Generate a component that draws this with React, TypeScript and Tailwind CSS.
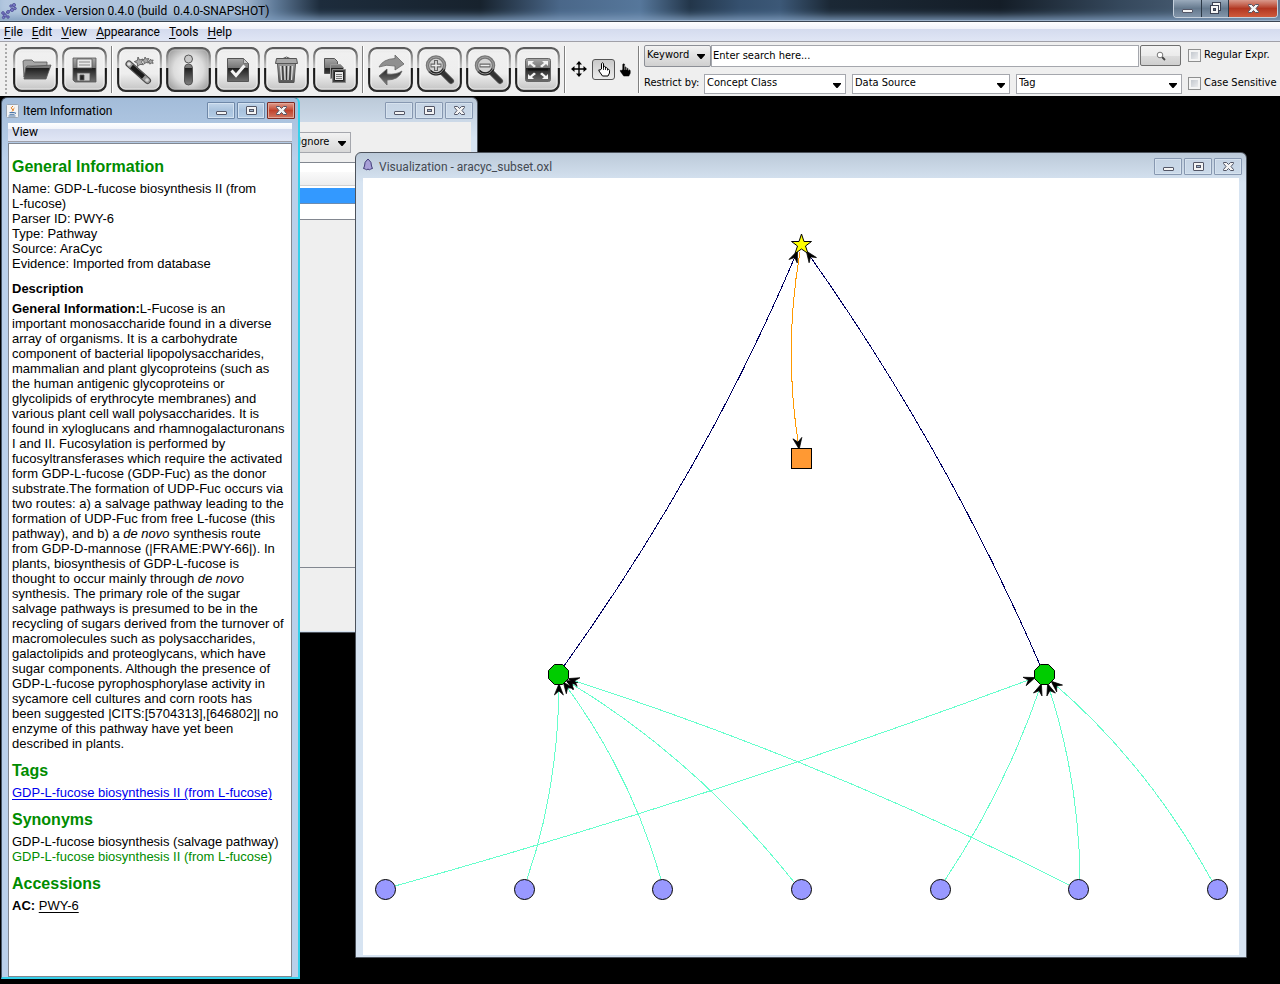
import React from "react";

type Kids = { children?: React.ReactNode };

function Defs() {
  return (
    <svg width="0" height="0" className="absolute" aria-hidden="true">
      <defs>
        <linearGradient id="frame" x1="0" y1="0" x2="0" y2="1">
          <stop offset="0" stopColor="#5a5a5a" />
          <stop offset="0.2" stopColor="#8a8a8a" />
          <stop offset="0.46" stopColor="#c8c8c8" />
          <stop offset="0.47" stopColor="#141414" />
          <stop offset="1" stopColor="#2c2c2c" />
        </linearGradient>
        <linearGradient id="face" x1="0" y1="0" x2="0" y2="1">
          <stop offset="0" stopColor="#e6e6e6" />
          <stop offset="0.12" stopColor="#f0f0f0" />
          <stop offset="0.6" stopColor="#eeeeee" />
          <stop offset="1" stopColor="#c2c2c2" />
        </linearGradient>
        <radialGradient id="pressed" cx="0.5" cy="0.5" r="0.7">
          <stop offset="0" stopColor="#f4f4f4" />
          <stop offset="0.5" stopColor="#dcdcdc" />
          <stop offset="1" stopColor="#8a8a8a" />
        </radialGradient>
        <linearGradient id="glyph" gradientUnits="userSpaceOnUse" x1="0" y1="9" x2="0" y2="36">
          <stop offset="0" stopColor="#b4b4b4" />
          <stop offset="0.43" stopColor="#777777" />
          <stop offset="0.44" stopColor="#1c1c1c" />
          <stop offset="1" stopColor="#777777" />
        </linearGradient>
        <linearGradient id="soft" gradientUnits="userSpaceOnUse" x1="0" y1="9" x2="0" y2="36">
          <stop offset="0" stopColor="#b8b8b8" />
          <stop offset="1" stopColor="#555555" />
        </linearGradient>
      </defs>
    </svg>
  );
}

function ToolButton({ label, pressed, children }: Kids & { label: string; pressed?: boolean }) {
  return (
    <button aria-label={label} className="size-[45px] shrink-0">
      <svg viewBox="0 0 45 45" className="size-[45px]">
        <rect x="1.2" y="1.2" width="42.6" height="42.6" rx="7.5" fill={pressed ? "url(#pressed)" : "url(#face)"} stroke="url(#frame)" strokeWidth="2.2" />
        <rect x="3" y="3" width="39" height="39" rx="5.5" fill="none" stroke="#fff" strokeOpacity={pressed ? 0.2 : 0.6} />
        {children}
      </svg>
    </button>
  );
}

function Sep() {
  return <div className="h-[47px] w-[2px] shrink-0 border-l border-[#808080] bg-white" />;
}

const FolderIcon = (
  <g stroke="#555" strokeWidth="0.8">
    <path d="M10 14l2-1h7l2 2h13v4H14l-3 11z" fill="#a5a5a5" />
    <path d="M13 20l25-2-5 14H11z" fill="url(#glyph)" />
  </g>
);
const SaveIcon = (
  <g stroke="#555" strokeWidth="0.8">
    <path d="M11 11h23v24H13l-2-2z" fill="url(#glyph)" />
    <path d="M15 12h15v9H15z" fill="#e8e8e8" />
    <path d="M17 15h11M17 18h11" stroke="#888" strokeWidth="1.2" />
    <path d="M15 26h13v8H15z" fill="#cfcfcf" />
    <path d="M18 28h4v5h-4z" fill="#222" />
  </g>
);
const WandIcon = (
  <g>
    <path d="M12 17l18.500 16.500" stroke="#4a4a4a" strokeWidth="7" strokeLinecap="round" />
    <path d="M12 17l18.500 16.500" stroke="#999" strokeWidth="5" strokeLinecap="round" />
    <path d="M14.500 19.500l12 10.500" stroke="#1a1a1a" strokeWidth="4.500" />
    <circle cx="12" cy="17" r="1.800" fill="#e6e6e6" />
    <circle cx="30" cy="33" r="1.800" fill="#d6d6d6" />
    <g fill="#aaa" stroke="#666" strokeWidth="1">
      <path d="M21 10l1.500 3 3.500-1-1.500 3.200 2 2.500-3.500-.3-2.500 2.200-.2-3.400-3-1.600 3.200-1.200z" />
      <path d="M28 10l1.200 2 2.600-.5-1.200 2.300 1 2.200-2.500-.5-2 1.400v-2.500l-1.800-1.400 2.300-.8z" />
      <path d="M33.500 12l.8 1.400 1.900-.4-.9 1.700.9 1.600-1.900-.2-1.500 1-.2-1.800-1.300-1 1.600-.7z" />
    </g>
  </g>
);
const InfoIcon = (
  <g stroke="#555" strokeWidth="1">
    <circle cx="22.500" cy="12" r="4" fill="#c8c8c8" />
    <rect x="18.500" y="17" width="8" height="21" rx="4" fill="url(#glyph)" />
  </g>
);
const CheckIcon = (
  <g>
    <path d="M12.500 11.500h16l5 5v18h-21z" fill="url(#glyph)" stroke="#555" />
    <path d="M28.500 11.500v5h5z" fill="#ccc" stroke="#666" strokeWidth="0.8" />
    <path d="M16.500 23.500l4.500 5 8.500-10" fill="none" stroke="#f4f4f4" strokeWidth="3" />
  </g>
);
const TrashIcon = (
  <g stroke="#555" fill="none">
    <path d="M19 11.500q3.500-3 7 0" />
    <path d="M13.500 16.500h18l-1.500 19h-15z" fill="url(#soft)" />
    <path d="M12.500 11.500h20l1 5h-22z" fill="#a8a8a8" />
    <path d="M16.500 19l1 14M20.500 19l.5 14M24.500 19l-.5 14M28.500 19l-1 14" stroke="#ddd" strokeWidth="1.300" />
    <path d="M18.500 19l.7 14M22.500 19v14M26.500 19l-.7 14" stroke="#333" />
  </g>
);
const CopyIcon = (
  <g stroke="#555">
    <path d="M11.500 11.500h10l3 3v12h-13z" fill="url(#glyph)" />
    <path d="M17.500 17.500h10l3 3v11h-13z" fill="url(#glyph)" stroke="#999" />
    <path d="M19.500 22.500h13v13h-13z" fill="#444" stroke="#888" />
    <path d="M21.500 24.500h9v9h-9z" fill="#e8e8e8" stroke="#222" />
    <path d="M23 27.500h6M23 29.500h6M23 31.500h6" stroke="#777" />
  </g>
);
const RefreshIcon = (
  <g stroke="#666" strokeWidth="0.8">
    <path d="M11 20q4-8 16-8.500V8l9 9-9 6v-4q-9-2-16 1z" fill="#909090" />
    <path d="M34 24q-3 9-15 9v5l-8-9 8-7v5q9 1 15-3z" fill="url(#glyph)" />
  </g>
);
const zoomIcon = (plus: boolean) => (
  <g>
    <path d="M25 25l9 9" stroke="#555" strokeWidth="6" strokeLinecap="round" />
    <path d="M26 26l8 8" stroke="#333" strokeWidth="4" strokeLinecap="round" />
    <circle cx="19" cy="18.500" r="8.500" fill="#d4d4d4" stroke="#777" strokeWidth="3.500" />
    <path d="M13 24a8.500 8.500 0 0 0 14-2" fill="none" stroke="#222" strokeWidth="3" />
    <circle cx="19" cy="18.500" r="8.500" fill="none" stroke="#aaa" strokeWidth="0.8" />
    <path d={plus ? "M13.500 18.500h11M19 13v11" : "M13.500 18.500h11"} stroke="#666" strokeWidth="4" />
    <path d={plus ? "M14.500 18.500h9M19 14v9" : "M14.500 18.500h9"} stroke="#eee" strokeWidth="1.500" />
  </g>
);
const FitIcon = (
  <g>
    <rect x="10.500" y="11.500" width="25" height="23" rx="2" fill="url(#glyph)" stroke="#666" />
    <path d="M13 21.500h20v2H13z" fill="#111" />
    <g fill="#f2f2f2">
      <path d="M13 14h6l-2 2 4 3-2 1.500-4-3.500-2 2zM33 14h-6l2 2-4 3 2 1.500 4-3.500 2 2zM13 32h6l-2-2 4-3-2-1.500-4 3.500-2-2zM33 32h-6l2-2-4-3 2-1.500 4 3.500 2-2z" />
    </g>
  </g>
);

const handPath = "M5.500 8V2.500q1.200-1.500 2 0V7V5.500q1.500-.8 2 .5V7q1.500-1 2 .5v1q1.500-.8 2 .8V12l-1.500 3H6.500l-3.500-5q-.8-1.800 1-1z";

function DropSelect({ label, value, className }: { label: string; value: string; className: string }) {
  return (
    <div className={"relative flex h-5 min-w-0 " + className}>
      <select aria-label={label} className="w-full appearance-none border border-[#a5a7ad] bg-white pl-[2px] outline-none">
        <option>{value}</option>
      </select>
      <svg className="pointer-events-none absolute right-[5px] top-[9px]" width="8" height="5" viewBox="0 0 8 5">
        <path d="M0 0h8v1L4.500 5h-1L0 1z" fill="#000" />
      </svg>
    </div>
  );
}

function Check({ text }: { text: string }) {
  return (
    <label className="flex w-[90px] shrink-0 items-center gap-[3px] whitespace-nowrap">
      <input type="checkbox" className="size-[13px] shrink-0 appearance-none border border-[#8e8f8f] bg-linear-to-br from-[#b9bec6] to-[#f6f6f6] shadow-[inset_0_0_0_2px_#f4f4f4]" />
      {text}
    </label>
  );
}

function WindowGlyph({ kind }: { kind: "min" | "max" | "close" }) {
  return (
    <svg width="13" height="11" viewBox="0 0 13 11" fill="#f4f4f4" stroke="#535666">
      {kind === "min" && <rect x="1.500" y="6.500" width="10" height="3" rx="0.500" />}
      {kind === "max" && (
        <>
          <rect x="1.500" y="1.500" width="10" height="8" rx="0.500" />
          <rect x="4.500" y="4.500" width="4" height="2" fill="#9fb4cc" />
        </>
      )}
      {kind === "close" && <path d="M1.500 1.500h3l2 2 2-2h3v1L9 5.500l2.500 3v1h-3l-2-2-2 2h-3v-1L4 5.500l-2.500-3z" />}
    </svg>
  );
}

function Controls({ active }: { active?: boolean }) {
  const base = "flex h-[17px] w-7 items-center justify-center rounded-[1px] border ";
  const idle = active
    ? "border-[#6f88a8] bg-linear-to-b from-[#c3d6ea] via-[#a9c2dd] to-[#b4cde6] shadow-[inset_0_0_0_1px_#d3e2f1]"
    : "border-[#8798b1] bg-linear-to-b from-[#c6d4e4] to-[#cbdaea] shadow-[inset_0_0_0_1px_#d6e2ee]";
  const close = active
    ? "border-[#7c2a22] bg-linear-to-b from-[#dd9c8e] via-[#c0422c] to-[#cf7560] shadow-[inset_0_0_0_1px_#e3a899]"
    : idle;
  return (
    <div className="flex gap-[2px]">
      <button aria-label="Minimize" className={base + idle}><WindowGlyph kind="min" /></button>
      <button aria-label="Maximize" className={base + idle}><WindowGlyph kind="max" /></button>
      <button aria-label="Close" className={base + close}><WindowGlyph kind="close" /></button>
    </div>
  );
}

const menus = ["File", "Edit", "View", "Appearance", "Tools", "Help"];

function Header() {
  return (
    <header>
      <div className="flex h-[22px] items-start border-b border-[#3a4552] bg-[linear-gradient(90deg,#b4c8e0_0,#a9bfd8_240px,#5f7a98_275px,#1d2c3c_320px,#17222d_480px,#4a6789_560px,#56779b_640px,#23364a_690px,#35506e_740px,#3c5877_780px,#1b2835_830px,#141d27_1000px,#35485c_1120px,#5b718a_100%)] pl-px shadow-[inset_0_-1px_0_#9db2c9,inset_0_-8px_8px_-4px_#7f9dbd]">
        <svg width="16" height="20" viewBox="0 0 16 20" className="mr-1 shrink-0">
          <path d="M13 5l-2 4-5 3-3 4" stroke="#6c6cb8" fill="none" />
          <g fill="#7a7ac8" stroke="#44448c" strokeWidth="0.700">
            <circle cx="13" cy="5" r="1.600" /><circle cx="10" cy="6" r="1.300" /><circle cx="14" cy="8.500" r="1.300" /><circle cx="11" cy="10" r="1.600" />
            <circle cx="7" cy="12" r="1.500" /><circle cx="2" cy="13" r="1.400" /><circle cx="4" cy="15.500" r="1.600" /><circle cx="7" cy="17" r="1.300" /><circle cx="2.500" cy="17.500" r="1.200" />
          </g>
        </svg>
        <h1 className="grow whitespace-pre text-[12px] leading-[22px] text-black">Ondex - Version 0.4.0 (build  0.4.0-SNAPSHOT)</h1>
        <div className="mr-[2px] flex h-[18px] overflow-hidden rounded-b-[4px] border border-t-0 border-[#c5d0dc]">
          <button aria-label="Minimize" className="flex w-7 items-center justify-center border-r border-[#2c3947] bg-linear-to-b from-[#9babbc] via-[#65798e] to-[#8295aa]"><WindowGlyph kind="min" /></button>
          <button aria-label="Restore" className="flex w-[27px] items-center justify-center border-r border-[#2c3947] bg-linear-to-b from-[#9babbc] via-[#65798e] to-[#8295aa]">
            <svg width="13" height="13" viewBox="0 0 13 13" fill="#f4f4f4" stroke="#3c4252">
              <rect x="3.500" y="0.500" width="8" height="8" /><rect x="1.500" y="3.500" width="8" height="8" /><rect x="4.500" y="6.500" width="2" height="2" fill="#56657a" />
            </svg>
          </button>
          <button aria-label="Close" className="flex w-12 items-center justify-center bg-linear-to-b from-[#d9998c] via-[#b23621] to-[#cf5a3c]"><WindowGlyph kind="close" /></button>
        </div>
      </div>
      <nav className="flex h-5 items-center gap-[9px] border-b border-[#a0a0a8] bg-[linear-gradient(#ffffff_0,#f1f3fa_35%,#d4dbee_36%,#e0e6f5_100%)] pl-1 text-[12px] leading-[18px] text-black">
        {menus.map((m) => (
          <button key={m}><span className="underline underline-offset-2">{m[0]}</span>{m.slice(1)}</button>
        ))}
      </nav>
      <div className="flex h-[54px] items-center gap-1 bg-[#efefef] pl-[5px] pr-[2px] font-['DejaVu_Sans_Condensed','DejaVu_Sans',sans-serif] text-[11px] text-black">
        <div className="h-[50px] w-1 shrink-0 bg-[repeating-linear-gradient(#aaa_0,#aaa_2px,transparent_2px,transparent_4px)] bg-[length:2px_100%] bg-no-repeat" />
        <ToolButton label="Open">{FolderIcon}</ToolButton>
        <ToolButton label="Save">{SaveIcon}</ToolButton>
        <Sep />
        <ToolButton label="Wizard">{WandIcon}</ToolButton>
        <ToolButton label="Item information" pressed>{InfoIcon}</ToolButton>
        <ToolButton label="Select">{CheckIcon}</ToolButton>
        <ToolButton label="Delete">{TrashIcon}</ToolButton>
        <ToolButton label="Copy">{CopyIcon}</ToolButton>
        <Sep />
        <ToolButton label="Refresh">{RefreshIcon}</ToolButton>
        <ToolButton label="Zoom in">{zoomIcon(true)}</ToolButton>
        <ToolButton label="Zoom out">{zoomIcon(false)}</ToolButton>
        <ToolButton label="Fit to window">{FitIcon}</ToolButton>
        <Sep />
        <button aria-label="Move" className="flex w-[18px] shrink-0 justify-center">
          <svg width="16" height="16" viewBox="0 0 16 16">
            <path d="M8 2v12M2 8h12" stroke="#000" strokeWidth="1.400" />
            <path d="M8 0l3 3.500H5zM8 16l3-3.500H5zM0 8l3.500-3v6zM16 8l-3.500-3v6z" />
          </svg>
        </button>
        <button aria-label="Hand" className="flex h-[21px] w-[23px] shrink-0 items-center justify-center rounded-[3px] border border-[#555] bg-linear-to-b from-[#c9c9c9] to-[#ececec]">
          <svg width="16" height="16" viewBox="0 0 16 16">
            <path d={handPath} fill="#fff" stroke="#000" />
            <path d="M7.500 6v3M9.500 6.500v2.500M11.500 7.500v2" stroke="#000" strokeWidth="0.800" />
          </svg>
        </button>
        <button aria-label="Pick" className="flex w-[15px] shrink-0 justify-center">
          <svg width="15" height="15" viewBox="2 0 15 16">
            <path d={handPath} fill="#000" stroke="#000" strokeWidth="0.500" />
            <path d="M7.700 3.500v5M9.700 5.500v3M11.700 7v2" stroke="#fff" strokeWidth="0.600" />
          </svg>
        </button>
        <Sep />
        <div className="flex min-w-0 grow flex-col gap-[7px]">
          <div className="flex h-[22px] items-center">
            <div className="relative flex h-[22px] w-[67px] shrink-0">
              <select aria-label="Search mode" className="w-full appearance-none rounded-[2px] border border-[#8c8f96] bg-linear-to-b from-[#f2f2f2] to-[#d0d0d0] pl-[2px] outline-none">
                <option>Keyword</option>
              </select>
              <svg className="pointer-events-none absolute right-[6px] top-[9px]" width="8" height="5" viewBox="0 0 8 5"><path d="M0 0h8v1L4.500 5h-1L0 1z" /></svg>
            </div>
            <input aria-label="Search" defaultValue="Enter search here..." className="h-[22px] min-w-0 grow border border-[#a5a7ad] bg-white pl-px outline-none" />
            <button aria-label="Run search" className="ml-px mr-[7px] flex h-[21px] w-[41px] shrink-0 items-center justify-center rounded-[2px] border border-[#707070] bg-[linear-gradient(#f4f4f4_0,#ebebeb_50%,#dddddd_51%,#cfcfcf_100%)]">
              <svg width="10" height="10" viewBox="0 0 10 10"><path d="M6 6l3 3" stroke="#444" strokeWidth="1.800" /><circle cx="4" cy="4" r="2.800" fill="#fff" stroke="#777" /></svg>
            </button>
            <Check text="Regular Expr." />
          </div>
          <div className="flex h-5 items-center gap-[6px]">
            <span className="w-[54px] shrink-0 whitespace-nowrap">Restrict by:</span>
            <DropSelect label="Concept class" value="Concept Class" className="grow-[142] basis-0" />
            <DropSelect label="Data source" value="Data Source" className="grow-[158] basis-0" />
            <DropSelect label="Tag" value="Tag" className="grow-[166] basis-0" />
            <Check text="Case Sensitive" />
          </div>
        </div>
      </div>
    </header>
  );
}

const generalLines = [
  "Name: GDP-L-fucose biosynthesis II (from",
  "L-fucose)",
  "Parser ID: PWY-6",
  "Type: Pathway",
  "Source: AraCyc",
  "Evidence: Imported from database",
];

const description: React.ReactNode[] = [
  <><b>General Information:</b>L-Fucose is an</>,
  "important monosaccharide found in a diverse",
  "array of organisms. It is a carbohydrate",
  "component of bacterial lipopolysaccharides,",
  "mammalian and plant glycoproteins (such as",
  "the human antigenic glycoproteins or",
  "glycolipids of erythrocyte membranes) and",
  "various plant cell wall polysaccharides. It is",
  "found in xyloglucans and rhamnogalacturonans",
  "I and II. Fucosylation is performed by",
  "fucosyltransferases which require the activated",
  "form GDP-L-fucose (GDP-Fuc) as the donor",
  "substrate.The formation of UDP-Fuc occurs via",
  "two routes: a) a salvage pathway leading to the",
  "formation of UDP-Fuc from free L-fucose (this",
  <>pathway), and b) a <i>de novo</i> synthesis route</>,
  "from GDP-D-mannose (|FRAME:PWY-66|). In",
  "plants, biosynthesis of GDP-L-fucose is",
  <>thought to occur mainly through <i>de novo</i></>,
  "synthesis. The primary role of the sugar",
  "salvage pathways is presumed to be in the",
  "recycling of sugars derived from the turnover of",
  "macromolecules such as polysaccharides,",
  "galactolipids and proteoglycans, which have",
  "sugar components. Although the presence of",
  "GDP-L-fucose pyrophosphorylase activity in",
  "sycamore cell cultures and corn roots has",
  "been suggested |CITS:[5704313],[646802]| no",
  "enzyme of this pathway have yet been",
  "described in plants.",
];

function Heading({ children }: Kids) {
  return <h2 className="mb-1 mt-[10px] text-[16px] font-bold leading-5 text-[#008c00]">{children}</h2>;
}

function ItemWindow() {
  return (
    <section className="absolute left-[1px] top-px flex h-[882px] w-[299px] flex-col rounded-t-[6px] border border-b-2 border-r-2 border-[#35d0ea] border-l-[#4a5a6c] border-t-[#3c4856] bg-linear-to-b from-[#a3bcd9] to-[#bad0ea] to-[60px] px-[6px] text-black">
      <div className="-ml-[2px] -mr-[3px] flex h-[25px] shrink-0 items-center gap-1">
        <svg width="13" height="14" viewBox="0 0 13 14" className="shrink-0">
          <rect x="0.500" y="0.500" width="12" height="13" rx="1" fill="#f4f4f4" stroke="#9aa6b4" />
          <path d="M7 2q-3 2-1 3t0 2.500M8.500 4q-2 1-1 2.500" stroke="#e07b1a" fill="none" />
          <path d="M3.500 8.500h5q2 0 .5 1.500M3.500 10.300h5M2.500 12h7" stroke="#4a76a8" fill="none" />
        </svg>
        <h2 className="grow text-[12px]">Item Information</h2>
        <Controls active />
      </div>
      <div className="flex h-[19px] shrink-0 items-center border-b border-[#a0a0a8] bg-[linear-gradient(#ffffff_0,#f1f3fa_35%,#d4dbee_36%,#e0e6f5_100%)] pl-1 text-[12px]">
        <button>View</button>
      </div>
      <div className="mt-px grow overflow-hidden border border-[#828790] bg-white pl-[3px] pt-[3px] font-['Liberation_Sans',Arial,sans-serif] text-[13px] leading-[15px] whitespace-nowrap">
        <Heading>General Information</Heading>
        {generalLines.map((l) => <p key={l}>{l}</p>)}
        <h3 className="mb-[5px] mt-[10px] font-bold">Description</h3>
        {description.map((l, i) => <p key={i}>{l}</p>)}
        <Heading>Tags</Heading>
        <p><a href="#tag" className="text-[#0000ee] underline underline-offset-2">GDP-L-fucose biosynthesis II (from L-fucose)</a></p>
        <Heading>Synonyms</Heading>
        <p>GDP-L-fucose biosynthesis (salvage pathway)</p>
        <p className="text-[#008c00]">GDP-L-fucose biosynthesis II (from L-fucose)</p>
        <Heading>Accessions</Heading>
        <p><b>AC:</b> <a href="#ac" className="underline underline-offset-2">PWY-6</a></p>
      </div>
    </section>
  );
}

function TableWindow() {
  return (
    <section className="absolute left-[180px] top-px flex h-[536px] w-[298px] flex-col rounded-t-[6px] border border-[#4d535c] bg-linear-to-b from-[#bccad9] to-[#d7e4f2] to-[40px] px-[6px] pb-[1px]">
      <div className="-mr-[2px] flex h-6 shrink-0 items-center justify-end"><Controls /></div>
      <div className="flex grow flex-col bg-[#efefef] pt-[10px] font-['DejaVu_Sans_Condensed','DejaVu_Sans',sans-serif] text-[11px] text-black">
        <div className="relative ml-[104px] flex h-[21px] w-[60px]">
          <select aria-label="Mode" className="w-full appearance-none border border-[#a5a7ad] bg-linear-to-b from-[#f2f2f2] to-[#d8d8d8] pl-[6px] outline-none"><option>Ignore</option></select>
          <svg className="pointer-events-none absolute right-[5px] top-[9px]" width="8" height="5" viewBox="0 0 8 5"><path d="M0 0h8v1L4.500 5h-1L0 1z" /></svg>
        </div>
        <div className="mt-[9px] h-[58px] border-y border-[#828790] bg-white">
          <div className="mt-[9px] h-[14px] border-b border-[#d0d0d0] bg-linear-to-b from-[#fafafa] to-[#ededee]" />
          <div className="mt-[2px] h-4 border-b border-[#6d8cb0] bg-[#3399ff]" />
        </div>
        <div className="h-[348px] border-b border-[#828790]" />
      </div>
    </section>
  );
}

type Edge = { d: string; color: string };
const edges: Edge[] = [
  { d: "M395 886Q705 800 1034 678", color: "#66ffcc" },
  { d: "M527 879Q558 790 559 685", color: "#66ffcc" },
  { d: "M661 879Q630 772 564 683", color: "#66ffcc" },
  { d: "M794 882Q694 757 567 681", color: "#66ffcc" },
  { d: "M1069 885Q829 763 569 679", color: "#66ffcc" },
  { d: "M945 880Q1005 790 1041 685", color: "#66ffcc" },
  { d: "M1080 879Q1079 778 1048 685", color: "#66ffcc" },
  { d: "M1212 881Q1147 763 1052 682", color: "#66ffcc" },
  { d: "M564 666Q706 468 797 252", color: "#000060" },
  { d: "M1040 665Q946 448 807 252", color: "#000060" },
  { d: "M800 252Q783 350 799 448", color: "#ff9900" },
];
const compounds = [385, 524, 662, 801, 940, 1078, 1217];
const reactions = [558, 1044];

function Graph() {
  return (
    <svg viewBox="363 178 876 777" className="block w-full grow" role="img" aria-label="Pathway graph">
      <defs>
        <marker id="arrow" markerUnits="userSpaceOnUse" markerWidth="13" markerHeight="12" refX="12" refY="6" orient="auto">
          <path d="M12 5.500L2 1.500l4 4.500-4 4.500 10-4z" fill="#000" stroke="#000" strokeWidth="0.700" />
        </marker>
      </defs>
      {edges.map((e) => (
        <path key={e.d} d={e.d} fill="none" stroke={e.color} shapeRendering="crispEdges" markerEnd="url(#arrow)" />
      ))}
      {compounds.map((x) => <circle key={x} cx={x + 0.5} cy="889.500" r="10" fill="#9999ff" stroke="#000" />)}
      {reactions.map((x) => (
        <path key={x} transform={`translate(${x + 0.5} 674.500)`} d="M-4-10H4L10-4V4L4 10H-4L-10 4V-4Z" fill="#00cc00" stroke="#000" />
      ))}
      <path d="M801.500 234l2.500 7.500h7.500l-6 4.500 2.500 7.500-6.500-4.500-6.500 4.500 2.500-7.500-6-4.500h7.500z" fill="#ffff00" stroke="#000" />
      <rect x="791.500" y="448.500" width="20" height="20" fill="#ff9933" stroke="#000" />
    </svg>
  );
}

function GraphWindow() {
  return (
    <section className="absolute left-[355px] top-14 flex h-[806px] w-[892px] flex-col rounded-t-[6px] border border-[#4d535c] bg-linear-to-b from-[#bccad9] to-[#d7e4f2] to-[30px] px-[7px] pb-[2px]">
      <div className="-mr-[3px] flex h-[25px] shrink-0 items-center gap-[6px] pt-[2px]">
        <svg width="10" height="13" viewBox="0 0 10 13" className="-mt-1 shrink-0"><path d="M5 1q4 3 3.500 7l1 2.500-2 .5L6.500 12 5 11l-1.500 1-1-1-2-.5 1-2.500Q1 4 5 1z" fill="#a8a0d8" stroke="#423c78" /></svg>
        <h2 className="grow text-[12px] text-[#444a52]">Visualization - aracyc_subset.oxl</h2>
        <Controls />
      </div>
      <div className="flex grow flex-col bg-white"><Graph /></div>
    </section>
  );
}

export default function App() {
  return (
    <div className="flex min-h-screen flex-col bg-black font-[Roboto,'Open_Sans',sans-serif]">
      <Defs />
      <Header />
      <main className="relative grow overflow-hidden bg-black">
        <TableWindow />
        <ItemWindow />
        <GraphWindow />
      </main>
    </div>
  );
}
